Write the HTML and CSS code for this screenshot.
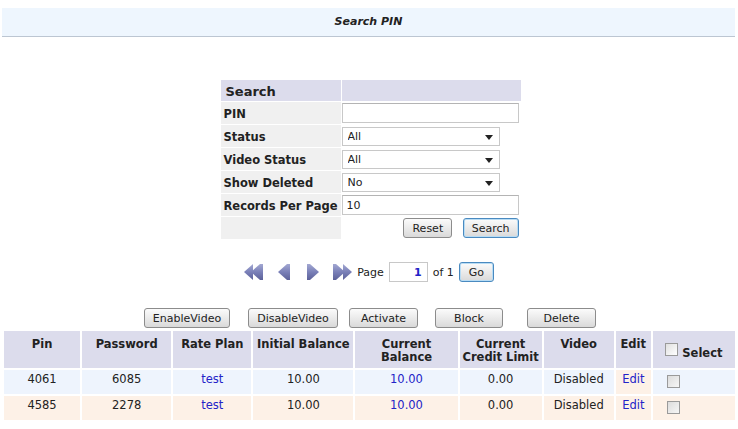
FILE: index.html
```html
<!DOCTYPE html>
<html lang="en">
<head>
  <meta charset="UTF-8">
  <title>Search PIN</title>
  <link rel="stylesheet" href="styles.css">
</head>
<body>
  <div class="title-bar">Search PIN</div>

  <table class="search-form">
    <tr>
      <th class="form-head">Search</th>
      <th class="form-head"></th>
    </tr>
    <tr>
      <td class="label">PIN</td>
      <td><input type="text" class="text-input"></td>
    </tr>
    <tr>
      <td class="label">Status</td>
      <td><span class="select-wrap"><select><option>All</option><option>Active</option><option>Blocked</option></select></span></td>
    </tr>
    <tr>
      <td class="label">Video Status</td>
      <td><span class="select-wrap"><select><option>All</option><option>Enabled</option><option>Disabled</option></select></span></td>
    </tr>
    <tr>
      <td class="label">Show Deleted</td>
      <td><span class="select-wrap"><select><option>No</option><option>Yes</option></select></span></td>
    </tr>
    <tr>
      <td class="label">Records Per Page</td>
      <td><input type="text" class="text-input" value="10"></td>
    </tr>
    <tr>
      <td class="label"></td>
      <td class="form-actions">
        <button class="btn">Reset</button>
        <button class="btn btn-default">Search</button>
      </td>
    </tr>
  </table>

  <div class="pager">
    <svg class="nav nav-first" width="20" height="18" viewBox="0 0 20 18">
      <defs>
        <linearGradient id="navfill" x1="0" y1="0" x2="0" y2="1">
          <stop offset="0" stop-color="#a3a8d2"/>
          <stop offset="0.5" stop-color="#7a80b8"/>
          <stop offset="1" stop-color="#5c6199"/>
        </linearGradient>
      </defs>
      <polygon points="0,9 9,1 9,17" fill="url(#navfill)"/>
      <polygon points="7,9 16,1 19,1 19,17 16,17" fill="url(#navfill)"/>
    </svg>
    <svg class="nav nav-prev" width="13" height="18" viewBox="0 0 13 18">
      <polygon points="0,9 9,1 12,1 12,17 9,17" fill="url(#navfill)"/>
    </svg>
    <svg class="nav nav-next" width="13" height="18" viewBox="0 0 13 18">
      <polygon points="1,1 4,1 13,9 4,17 1,17" fill="url(#navfill)"/>
    </svg>
    <svg class="nav nav-last" width="20" height="18" viewBox="0 0 20 18">
      <polygon points="1,1 4,1 13,9 4,17 1,17" fill="url(#navfill)"/>
      <polygon points="11,1 20,9 11,17" fill="url(#navfill)"/>
    </svg>
    <span class="pager-text">Page</span>
    <input type="text" class="page-input" value="1">
    <span class="pager-text">of 1</span>
    <button class="btn btn-default btn-go">Go</button>
  </div>

  <div class="actions">
    <button class="btn btn-enable">EnableVideo</button>
    <button class="btn btn-disable">DisableVideo</button>
    <button class="btn btn-activate">Activate</button>
    <button class="btn btn-block">Block</button>
    <button class="btn btn-delete">Delete</button>
  </div>

  <table class="pins">
    <colgroup>
      <col style="width:76px">
      <col style="width:89px">
      <col style="width:78px">
      <col style="width:100px">
      <col style="width:102px">
      <col style="width:82px">
      <col style="width:70px">
      <col style="width:35px">
      <col style="width:82px">
    </colgroup>
    <thead>
      <tr>
        <th>Pin</th>
        <th>Password</th>
        <th>Rate Plan</th>
        <th>Initial Balance</th>
        <th>Current<br>Balance</th>
        <th>Current<br>Credit Limit</th>
        <th>Video</th>
        <th>Edit</th>
        <th class="select-head"><input type="checkbox" class="check"> Select</th>
      </tr>
    </thead>
    <tbody>
      <tr class="row-odd">
        <td>4061</td>
        <td>6085</td>
        <td><a href="#">test</a></td>
        <td>10.00</td>
        <td><a href="#">10.00</a></td>
        <td>0.00</td>
        <td>Disabled</td>
        <td class="edit-cell"><a href="#">Edit</a></td>
        <td class="select-cell"><input type="checkbox" class="check"></td>
      </tr>
      <tr class="row-even">
        <td>4585</td>
        <td>2278</td>
        <td><a href="#">test</a></td>
        <td>10.00</td>
        <td><a href="#">10.00</a></td>
        <td>0.00</td>
        <td>Disabled</td>
        <td class="edit-cell"><a href="#">Edit</a></td>
        <td class="select-cell"><input type="checkbox" class="check"></td>
      </tr>
    </tbody>
  </table>
</body>
</html>
```

FILE: styles.css
```css
* {
  box-sizing: border-box;
}

body {
  margin: 0;
  padding: 8px 3px 0 2px;
  font-family: "DejaVu Sans", Verdana, sans-serif;
  font-size: 11px;
  color: #222;
  background: #fff;
}

a {
  color: #2323c8;
  text-decoration: none;
}

.title-bar {
  height: 29px;
  line-height: 28px;
  background: #eef6fe;
  border-bottom: 1px solid #bcc6d2;
  text-align: center;
  font-weight: bold;
  font-style: italic;
  font-size: 11px;
}

/* search form */
.search-form {
  margin: 42px auto 0;
  width: 302px;
  border-spacing: 1px;
  position: relative;
  left: 2px;
}

.search-form td,
.search-form th {
  padding: 0;
  height: 22px;
}

.search-form .form-head {
  height: 21px;
  background: #dcdcec;
  text-align: left;
  font-size: 13px;
  padding: 1px 0 0 5px;
}

.search-form .label {
  width: 120px;
  background: #f0f0f0;
  font-weight: bold;
  font-size: 11.5px;
  padding: 1px 0 0 3px;
  white-space: nowrap;
}

.text-input {
  display: block;
  width: 177px;
  height: 20px;
  border: 1px solid #c8c8c8;
  border-top-color: #b4b4b4;
  padding: 0 4px;
  font-family: inherit;
  font-size: 11px;
  color: #222;
}

.select-wrap {
  display: block;
  position: relative;
  width: 158px;
}

.select-wrap::after {
  content: "";
  position: absolute;
  right: 7px;
  top: 8px;
  border-left: 4px solid transparent;
  border-right: 4px solid transparent;
  border-top: 5px solid #222;
  pointer-events: none;
}

.select-wrap select {
  appearance: none;
  display: block;
  width: 158px;
  height: 19px;
  border: 1px solid #c8c8c8;
  background: #fff;
  padding: 0 5px;
  font-family: inherit;
  font-size: 11px;
  color: #222;
  border-radius: 0;
}

.form-actions {
  text-align: right;
  padding-right: 2px !important;
}

/* buttons */
.btn {
  height: 20px;
  padding: 0 8px;
  border: 1px solid #8c8c8c;
  border-radius: 3px;
  background: linear-gradient(#fbfbfb, #e9e9e9 55%, #d9d9d9);
  font-family: inherit;
  font-size: 11px;
  color: #222;
  cursor: pointer;
  vertical-align: middle;
}

.btn-default {
  border-color: #4a8ac0;
  box-shadow: inset 0 0 0 1px #b8dcf4;
}

.form-actions .btn {
  margin-left: 7px;
}

/* pager */
.pager {
  display: flex;
  align-items: center;
  justify-content: center;
  margin-top: 22px;
  height: 20px;
  padding-left: 1px;
}

.nav {
  display: block;
}

.nav-first { margin-right: 14px; }
.nav-prev { margin-right: 15px; }
.nav-next { margin-right: 13px; }
.nav-last { margin-right: 5px; }

.page-input {
  width: 39px;
  height: 20px;
  margin: 0 5px;
  border: 1px solid #c8c8c8;
  text-align: right;
  padding: 0 5px;
  font-family: inherit;
  font-size: 11px;
  font-weight: bold;
  color: #2323c8;
}

.btn-go {
  margin-left: 5px;
  width: 35px;
  padding: 0;
}

/* action buttons */
.actions {
  display: flex;
  justify-content: center;
  margin-top: 26px;
  padding-left: 3px;
}

.actions .btn {
  padding: 0;
}

.btn-enable { width: 86px; margin-right: 18px; }
.btn-disable { width: 90px; margin-right: 11px; }
.btn-activate { width: 69px; margin-right: 17px; }
.btn-block { width: 68px; margin-right: 24px; }
.btn-delete { width: 69px; }

/* results table */
.pins {
  margin-top: 1px;
  width: 735px;
  table-layout: fixed;
  border-spacing: 2px;
}

.pins th {
  background: #dcdcec;
  font-size: 11.5px;
  font-weight: bold;
  vertical-align: top;
  padding: 7px 0 3px;
  height: 37px;
  line-height: 13px;
}

.pins td {
  text-align: center;
  vertical-align: top;
  height: 24px;
  padding: 2px 0 0;
  font-size: 11.5px;
}

.row-odd td {
  background: #eef4fd;
}

.row-even td {
  background: #fdf1e7;
}

.pins .edit-cell {
  background: #fdf1e7;
}

.pins .select-cell {
  text-align: left;
  padding: 5px 0 0 14px;
}

.pins .select-head {
  padding-top: 12px;
  white-space: nowrap;
}

.check {
  appearance: none;
  display: inline-block;
  width: 13px;
  height: 13px;
  margin: 0;
  border: 1px solid #9a9a9a;
  background: linear-gradient(135deg, #dcdcdc, #f6f6f6);
  vertical-align: -2px;
}

.select-cell .check {
  vertical-align: top;
}

.select-head .check {
  vertical-align: 1px;
  background: linear-gradient(135deg, #e0e0e0, #fff);
}
```
